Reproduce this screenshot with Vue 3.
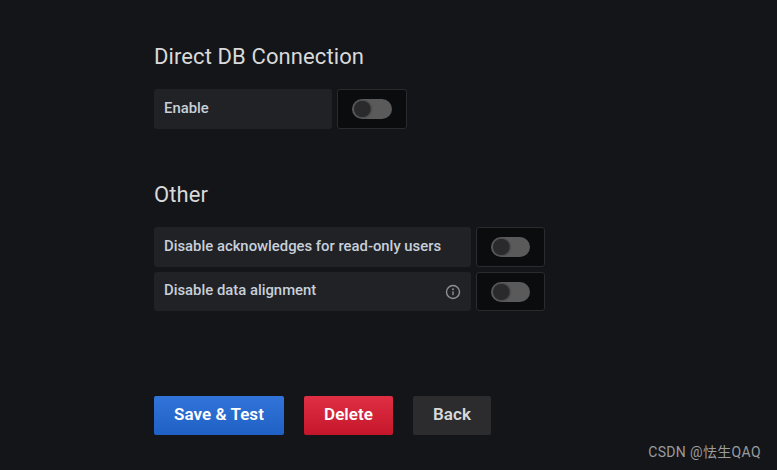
<script setup>
const otherRows = [
  { label: 'Disable acknowledges for read-only users', info: false },
  { label: 'Disable data alignment', info: true },
]
</script>

<template>
  <main class="page">
    <section class="db">
      <h3>Direct DB Connection</h3>
      <div class="row">
        <div class="label narrow">Enable</div>
        <div class="switch-box"><span class="track"><span class="knob"></span></span></div>
      </div>
    </section>
    <section class="other">
      <h3>Other</h3>
      <div v-for="row in otherRows" :key="row.label" class="row">
        <div class="label wide">
          <span>{{ row.label }}</span>
          <svg v-if="row.info" class="info" viewBox="0 0 16 16" width="16" height="16" fill="none">
            <circle cx="8" cy="8" r="6.5" stroke="currentColor" stroke-width="1.4" />
            <circle cx="8" cy="5.2" r="0.95" fill="currentColor" />
            <rect x="7.3" y="7.2" width="1.4" height="4" rx="0.4" fill="currentColor" />
          </svg>
        </div>
        <div class="switch-box"><span class="track"><span class="knob"></span></span></div>
      </div>
    </section>
    <div class="actions">
      <button class="btn save">Save &amp; Test</button>
      <button class="btn del">Delete</button>
      <button class="btn back">Back</button>
    </div>
    <div class="mark">CSDN @怯生QAQ</div>
  </main>
</template>

<style>
html, body { margin: 0; background: #141519; }
</style>

<style scoped>
.page {
  position: relative;
  box-sizing: border-box;
  width: 777px;
  height: 470px;
  overflow: hidden;
  padding: 43px 0 0 154px;
  background: #141519;
  font-family: Roboto, "Noto Sans CJK SC", sans-serif;
}
h3 {
  margin: 0;
  font-size: 22px;
  line-height: 27px;
  font-weight: 400;
  letter-spacing: 0.1px;
  color: #d8d9da;
}
.db h3 { margin-bottom: 19px; }
.other { margin-top: 52px; }
.other h3 { margin-bottom: 19px; }
.row {
  display: flex;
  gap: 5px;
  height: 40px;
  margin-bottom: 5px;
}
.other .row:last-child { height: 39px; margin-bottom: 0; }
.label {
  display: flex;
  align-items: center;
  justify-content: space-between;
  box-sizing: border-box;
  padding: 0 10px;
  border-radius: 3px;
  background: #212226;
  color: #c7d0d9;
  font-size: 14.85px;
  font-weight: 500;
}
.narrow { width: 178px; padding-bottom: 3px; }
.wide { width: 317px; padding-bottom: 3px; }
.info { color: #8e9094; margin: 3px 0.5px 0 0; flex: none; }
.switch-box {
  display: flex;
  align-items: center;
  justify-content: center;
  box-sizing: border-box;
  width: 70px;
  border: 1px solid #2a2b2f;
  border-radius: 3px;
  background: #0b0c0e;
}
.other .switch-box { width: 69px; }
.track {
  display: block;
  position: relative;
  width: 40px;
  height: 20px;
  border-radius: 10px;
  background: #5a5a5a;
}
.other .track { width: 39px; }
.knob {
  position: absolute;
  left: 2px;
  top: 2px;
  width: 16px;
  height: 16px;
  border-radius: 50%;
  background: #2a2a2c;
  box-shadow: 1px 0 2px rgba(20, 20, 22, 0.7);
}
.actions {
  display: flex;
  gap: 20px;
  margin-top: 85px;
}
.btn {
  height: 39px;
  border: 0;
  padding: 0 0 3px;
  border-radius: 2px;
  font-family: inherit;
  font-size: 17px;
  font-weight: 600;
  letter-spacing: 0.05px;
  color: #fff;
}
.save { width: 130px; background: linear-gradient(#3274d9, #1f60c4); }
.del { width: 89px; background: linear-gradient(#e02f44, #c4162a); }
.back { width: 78px; background: #2c2c2e; color: #d8d9da; }
.mark {
  position: absolute;
  right: 16px;
  top: 443px;
  font-size: 14px;
  line-height: 18px;
  letter-spacing: 0.35px;
  color: #9b9c9e;
}
</style>
